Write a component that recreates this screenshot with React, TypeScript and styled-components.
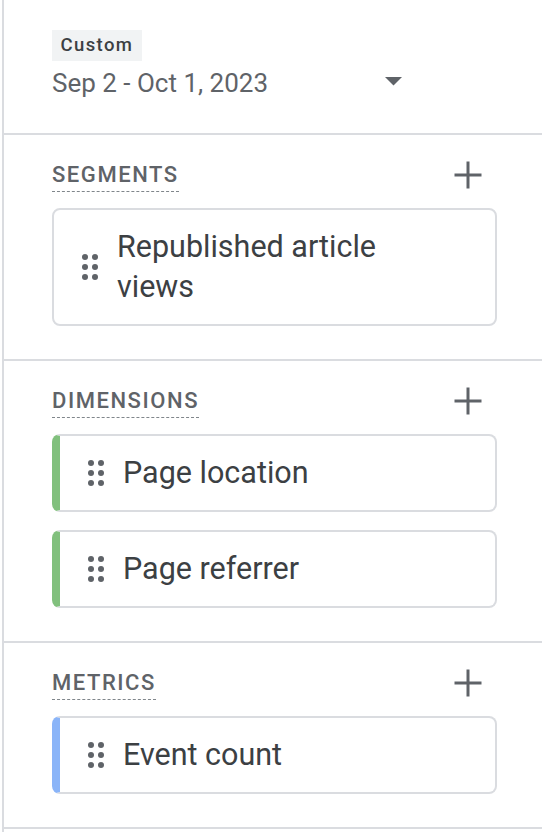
import React from "react";
import styled, { createGlobalStyle } from "styled-components";

const Global = createGlobalStyle`
  html, body { margin: 0; padding: 0; background: #ffffff; }
  body { font-family: Roboto, "Liberation Sans", Arial, sans-serif; -webkit-font-smoothing: antialiased; }
`;

const Panel = styled.div`
  margin-left: 2px;
  width: 540px;
  height: 832px;
  border-left: 2px solid #dadce0;
  box-sizing: border-box;
  display: flex;
  flex-direction: column;
`;

const Section = styled.section<{ $top: number; $bottom: number }>`
  padding: ${(p) => p.$top}px 45px ${(p) => p.$bottom}px 48px;
  border-bottom: 2px solid #dadce0;
  display: flex;
  flex-direction: column;
`;

const Chip = styled.span`
  align-self: flex-start;
  height: 31px;
  line-height: 31px;
  padding: 0 8.5px 0 8.5px;
  background: #f1f3f4;
  color: #3c4043;
  font-size: 18.5px;
  font-weight: 500;
  letter-spacing: 1.4px;
`;

const DateRow = styled.div`
  width: 350px;
  margin-top: 4px;
  display: flex;
  align-items: center;
  justify-content: space-between;
`;

const DateText = styled.span`
  font-size: 26px;
  line-height: 36px;
  color: #5f6368;
`;

const Caret = styled.svg`
  width: 17px;
  height: 9px;
  margin-top: -3px;
  fill: #5f6368;
`;

const HeaderRow = styled.div`
  display: flex;
  justify-content: space-between;
  align-items: flex-start;
  margin-bottom: 16px;
`;

const Title = styled.span`
  font-size: 22px;
  line-height: 24px;
  font-weight: 500;
  letter-spacing: 1.55px;
  color: #5f6368;
  padding-bottom: 4px;
  border-bottom: 1px dashed #80868b;
`;

const PlusIcon = styled.svg`
  width: 28px;
  height: 28px;
  margin-top: -2px;
  margin-right: 15px;
  stroke: #5f6368;
  stroke-width: 3;
`;

const CardList = styled.div`
  display: flex;
  flex-direction: column;
  gap: 18px;
`;

const Card = styled.div<{ $accent?: string }>`
  display: flex;
  align-items: center;
  gap: 19px;
  padding: 17px 20px 17px 28px;
  border: 2px solid #dadce0;
  border-left: ${(p) => (p.$accent ? `8px solid ${p.$accent}` : "2px solid #dadce0")};
  border-radius: 8px;
  background: #fff;
`;

const Handle = styled.svg`
  flex: none;
  width: 16px;
  height: 26px;
  fill: #5f6368;
`;

const Label = styled.span`
  max-width: 300px;
  font-size: 30.5px;
  line-height: 40px;
  color: #3c4043;
`;

const DragHandle = () => (
  <Handle viewBox="0 0 16 26">
    {[3, 13].map((x) =>
      [3, 13, 23].map((y) => <circle key={`${x}-${y}`} cx={x} cy={y} r={3} />)
    )}
  </Handle>
);

const Plus = () => (
  <PlusIcon viewBox="0 0 28 28">
    <line x1="14" y1="0.5" x2="14" y2="27.5" />
    <line x1="0.5" y1="14" x2="27.5" y2="14" />
  </PlusIcon>
);

type Item = { label: string; accent?: string };

const Group = ({ title, items }: { title: string; items: Item[] }) => (
  <Section $top={28} $bottom={33}>
    <HeaderRow>
      <Title>{title}</Title>
      <Plus />
    </HeaderRow>
    <CardList>
      {items.map((it) => (
        <Card key={it.label} $accent={it.accent}>
          <DragHandle />
          <Label>{it.label}</Label>
        </Card>
      ))}
    </CardList>
  </Section>
);

export default function App() {
  return (
    <>
      <Global />
      <Panel>
        <Section $top={30} $bottom={32}>
          <Chip>Custom</Chip>
          <DateRow>
            <DateText>Sep 2 - Oct 1, 2023</DateText>
            <Caret viewBox="0 0 17 9">
              <polygon points="0,0 17,0 8.5,8.5" />
            </Caret>
          </DateRow>
        </Section>
        <Group title="SEGMENTS" items={[{ label: "Republished article views" }]} />
        <Group
          title="DIMENSIONS"
          items={[
            { label: "Page location", accent: "#81c07d" },
            { label: "Page referrer", accent: "#81c07d" },
          ]}
        />
        <Group title="METRICS" items={[{ label: "Event count", accent: "#8ab4f8" }]} />
      </Panel>
    </>
  );
}
